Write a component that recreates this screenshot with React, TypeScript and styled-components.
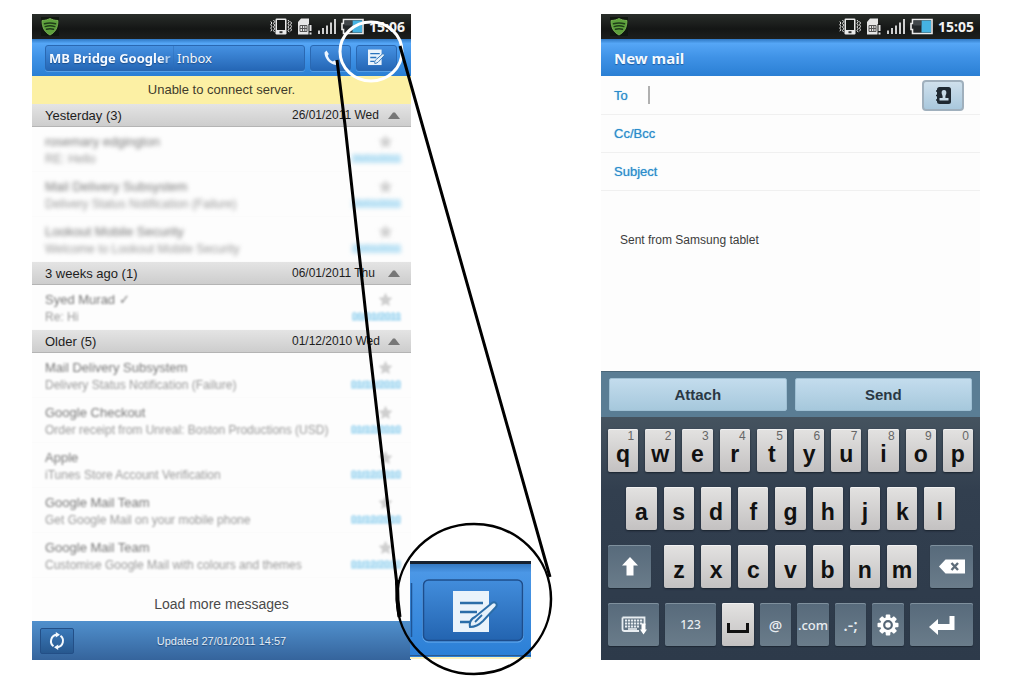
import React from 'react';
import styled, { createGlobalStyle, css } from 'styled-components';

const sans = `"Liberation Sans", Arial, sans-serif`;
const human = `"Noto Sans", "Open Sans", sans-serif`;

const GlobalStyle = createGlobalStyle`
  * { box-sizing: border-box; }
  body { margin: 0; background: #fff; font-family: ${sans}; color: #222; }
  button, input, textarea { font: inherit; color: inherit; margin: 0; }
  button { cursor: pointer; padding: 0; }
  svg { display: block; }
`;

const Page = styled.main`
  display: grid;
  grid-template-columns: minmax(0, 379fr) minmax(0, 190fr) minmax(0, 379fr);
  padding: 14px 44px 22px 32px;
`;

const Phone = styled.section<{ $column: number }>`
  grid-column: ${(p) => p.$column};
  grid-row: 1;
  position: relative;
  display: flex;
  flex-direction: column;
  background: #fdfdfd;
`;

/* Status bar */

const StatusRow = styled.div`
  display: flex;
  align-items: center;
  height: 25px;
  padding: 0 6px 0 9px;
  background: linear-gradient(#292d2a, #141615 60%, #1d1f1e);
  color: #f2f2f2;
`;

const StatusIcons = styled.div`
  display: flex;
  align-items: center;
  gap: 5px;
  margin-left: auto;
`;

const Clock = styled.time`
  font: bold 14px/24px ${human};
  margin-left: 5px;
`;

const ShieldIcon = () => (
  <svg width="18" height="19" viewBox="0 0 18 19">
    <rect width="18" height="19" fill="#10170f" />
    <path d="M1 3.500C4 3.500 7 2.500 9 1.500C11 2.500 14 3.500 17 3.500C17 11 14 15.500 9 18C4 15.500 1 11 1 3.500Z" fill="#5da03c" stroke="#82bd5a" strokeWidth="0.800" />
    <path d="M3.500 6.800Q9 5 14.500 6.800M4.200 9.600Q9 8 13.800 9.600M5.500 12.300Q9 11 12.500 12.300" fill="none" stroke="#1f3d19" strokeWidth="1.500" strokeLinecap="round" />
  </svg>
);

const VibrateIcon = () => (
  <svg width="22" height="17" viewBox="0 0 22 17">
    <rect x="5.500" y="0.500" width="11" height="16" rx="1.200" fill="#e9e9e9" />
    <rect x="7" y="2" width="8" height="10" fill="#151716" />
    <rect x="9.500" y="13.200" width="3" height="2" fill="#333" />
    <path d="M3.500 2l1.200 1.600-1.200 1.800 1.200 1.800-1.200 1.800 1.200 1.800-1.200 1.800 1.200 1.600M.8 3.500l1 1.500-1 1.700 1 1.700-1 1.700 1 1.700-1 1.500M18 2l1.200 1.600L18 5.400l1.200 1.800L18 9l1.200 1.800-1.200 1.800 1.200 1.600M20.500 3.500l1 1.500-1 1.700 1 1.700-1 1.700 1 1.700-1 1.500" fill="none" stroke="#e9e9e9" strokeWidth="1" />
  </svg>
);

const SimIcon = () => (
  <svg width="16" height="17" viewBox="0 0 16 17">
    <path d="M4 0.500H12V7H13V16.500H1V4Z" fill="#e6e6e6" />
    <path d="M3 7.500H10V13.500H3ZM5.500 7.500V13.500M7.800 7.500V13.500M3 10.500H10" fill="none" stroke="#555" strokeWidth="1" />
    <rect x="11.500" y="6" width="4" height="11" fill="#151716" />
    <path d="M13.500 7V13M13.500 14.500V16.500" stroke="#e6e6e6" strokeWidth="2" />
  </svg>
);

const SignalIcon = () => (
  <svg width="18" height="17" viewBox="0 0 18 17">
    <path d="M1 16V12.500M5 16V10M9 16V7.500M13 16V4.500M17 16V1" stroke="#cfcfcf" strokeWidth="2" />
  </svg>
);

const BatteryIcon = () => (
  <svg width="23" height="17" viewBox="0 0 23 17">
    <path d="M2.500 1.500H22V15.500H2.500V11.500H1V5.500H2.500Z" fill="#23272a" stroke="#ececec" strokeWidth="1.600" />
    <rect x="11.500" y="2.500" width="9.500" height="12" fill="#45b3e2" />
    <rect x="3.500" y="2.500" width="8" height="5" fill="#555b60" opacity=".6" />
  </svg>
);

const StatusBar = ({ time }: { time: string }) => (
  <StatusRow>
    <ShieldIcon />
    <StatusIcons>
      <VibrateIcon />
      <SimIcon />
      <SignalIcon />
      <BatteryIcon />
    </StatusIcons>
    <Clock>{time}</Clock>
  </StatusRow>
);

/* Title bars */

const TitleBar = styled.header`
  display: flex;
  align-items: center;
  gap: 5px;
  height: 37px;
  padding: 0 14px 0 13px;
  background: linear-gradient(#2f78c4, #55a6f6 12%, #3f92e6 50%, #2a7fd4);
  color: #f4f9ff;
`;

const Title = styled.h1`
  margin: 0;
  font: bold 15px/20px ${human};
  text-shadow: 0 1px 1px #1c5a9e;
`;

const blueButton = css`
  display: flex;
  align-items: center;
  height: 26px;
  border: 1px solid #2a68b2;
  border-radius: 3px;
  background: linear-gradient(#4591e2, #2567b6);
  box-shadow: 0 1px 0 #559fe6;
  color: #f4f9ff;
`;

const FolderButton = styled.button`
  ${blueButton}
  flex: 1;
  min-width: 0;
  font: 13px/24px ${human};
  text-shadow: 0 1px 1px #1c4f8c;
`;

const Account = styled.strong`
  width: 128px;
  padding-left: 3px;
  border-right: 1px solid #2d6db8;
  overflow: hidden;
  white-space: nowrap;
  text-align: left;
  mask-image: linear-gradient(to right, #000 115px, rgba(0, 0, 0, 0.5) 123px);
`;

const Folder = styled.span`
  padding-left: 3px;
`;

const BarButton = styled.button`
  ${blueButton}
  justify-content: center;
  width: 41px;
`;

const PhoneIcon = () => (
  <svg width="16" height="18" viewBox="0 0 16 18">
    <path d="M3.500 1.500L1.500 3.500C1.500 9.500 6.500 15 13 16L15 13.500L11.500 11.500L9.800 12.600C7.300 11.300 5.700 9.300 4.800 6.700L5.800 5Z" fill="#eef6ff" />
  </svg>
);

const ComposeIcon = ({ size }: { size: number }) => (
  <svg width={size} height={size} viewBox="0 0 45 42">
    <path d="M0 0H36V41H0Z" fill="#eaf3fb" />
    <path d="M6 11H31M6 21H22M6 31H17" stroke="#2b74bd" strokeWidth="3.400" />
    <path d="M18 37C17 32 18 29 22 26L38 12C41 10 45 13 43 16L29 31C26 35 22 36 18 37Z" fill="#e6f1fb" stroke="#286fb6" strokeWidth="2.400" />
  </svg>
);

/* Inbox */

const Banner = styled.p`
  margin: 0;
  font-size: 13px;
  line-height: 28px;
  text-align: center;
  background: #fcf0a4;
  color: #3f3c2c;
`;

const GroupHeader = styled.button`
  display: flex;
  align-items: center;
  width: 100%;
  height: 23px;
  padding: 0 11px 0 13px;
  border: 0;
  border-bottom: 1px solid #b4b4b4;
  background: linear-gradient(#e4e4e4, #cdcdcd);
  color: #1d1d1d;
  font-size: 13px;
  text-align: left;
`;

const GroupDate = styled.span`
  width: 92px;
  margin-left: auto;
  margin-right: 4px;
  font-size: 12px;
  white-space: nowrap;
`;

const Messages = styled.ul`
  margin: 0;
  padding: 0;
  list-style: none;
`;

const Message = styled.li<{ $blur: number }>`
  display: grid;
  grid-template-columns: minmax(0, 1fr) 52px;
  grid-template-rows: 17px 17px;
  align-items: center;
  height: 45px;
  padding: 6px 10px 0 13px;
  border-bottom: 1px solid #fbfbfb;
  white-space: nowrap;

  & > * {
    filter: blur(${(p) => p.$blur}px);
  }
`;

const Sender = styled.span`
  font-size: 13px;
  color: #777;
`;

const Preview = styled.span`
  font-size: 12px;
  color: #999;
`;

const Star = styled.span`
  justify-self: end;
  padding-right: 8px;
`;

const Sent = styled.time`
  justify-self: end;
  font-size: 10px;
  line-height: 8px;
  color: #9fd4ef;
  background: #c8e8f7;
`;

const LoadMore = styled.button`
  height: 43px;
  padding-top: 8px;
  border: 0;
  background: none;
  font-size: 14px;
  color: #4a4a4a;
`;

const Footer = styled.footer`
  display: grid;
  grid-template-columns: 34px 1fr 34px;
  align-items: center;
  height: 39px;
  padding: 0 8px;
  background: linear-gradient(#5090cd, #35649c);
  color: #e3edf7;
  font-size: 11px;
  text-align: center;
  text-shadow: 0 1px 1px #234b7a;
`;

const RefreshButton = styled.button`
  display: grid;
  place-items: center;
  height: 26px;
  border: 1px solid #234f87;
  border-radius: 2px;
  background: linear-gradient(#3a78b8, #27588f);
`;

const RefreshIcon = () => (
  <svg width="18" height="18" viewBox="0 0 18 18">
    <path d="M5.500 14.200A6.400 6.400 0 0 1 8.500 2.800M12.500 3.800A6.400 6.400 0 0 1 9.500 15.200" fill="none" stroke="#f3f8fd" strokeWidth="2" />
    <path d="M7.800 0L12 2.800L7.800 5.600ZM10.200 12.400L6 15.200L10.200 18Z" fill="#f3f8fd" />
  </svg>
);

type Mail = [sender: string, preview: string];
type Group = { title: string; date: string; blur: number; sent: string; mails: Mail[] };

const groups: Group[] = [
  {
    title: 'Yesterday (3)',
    date: '26/01/2011 Wed',
    sent: '26/01/2011',
    blur: 2,
    mails: [
      ['rosemary edgington', 'RE: Hello'],
      ['Mail Delivery Subsystem', 'Delivery Status Notification (Failure)'],
      ['Lookout Mobile Security', 'Welcome to Lookout Mobile Security'],
    ],
  },
  {
    title: '3 weeks ago (1)',
    date: '06/01/2011 Thu',
    sent: '06/01/2011',
    blur: 1,
    mails: [['Syed Murad ✓', 'Re: Hi']],
  },
  {
    title: 'Older (5)',
    date: '01/12/2010 Wed',
    sent: '01/12/2010',
    blur: 1,
    mails: [
      ['Mail Delivery Subsystem', 'Delivery Status Notification (Failure)'],
      ['Google Checkout', 'Order receipt from Unreal: Boston Productions (USD)'],
      ['Apple', 'iTunes Store Account Verification'],
      ['Google Mail Team', 'Get Google Mail on your mobile phone'],
      ['Google Mail Team', 'Customise Google Mail with colours and themes'],
    ],
  },
];

const Inbox = () => (
  <Phone $column={1}>
    <StatusBar time="15:06" />
    <TitleBar>
      <FolderButton>
        <Account>MB Bridge Googler</Account>
        <Folder>Inbox</Folder>
      </FolderButton>
      <BarButton aria-label="Call">
        <PhoneIcon />
      </BarButton>
      <BarButton aria-label="Compose">
        <ComposeIcon size={17} />
      </BarButton>
    </TitleBar>
    <Banner role="status">Unable to connect server.</Banner>
    {groups.map((g) => (
      <div key={g.title}>
        <GroupHeader>
          {g.title}
          <GroupDate>{g.date}</GroupDate>
          <svg width="12" height="7" viewBox="0 0 12 7">
            <path d="M0 7L5 0.500H7L12 7Z" fill="#777" />
          </svg>
        </GroupHeader>
        <Messages>
          {g.mails.map(([sender, preview], i) => (
            <Message key={i} $blur={g.blur}>
              <Sender>{sender}</Sender>
              <Star>
                <svg width="15" height="15" viewBox="0 0 24 24">
                  <path d="M12 1L15.400 8.300L23 9.200L17.400 14.600L18.900 22.500L12 18.600L5.100 22.500L6.600 14.600L1 9.200L8.600 8.300Z" fill="#cfcfcf" />
                </svg>
              </Star>
              <Preview>{preview}</Preview>
              <Sent>{g.sent}</Sent>
            </Message>
          ))}
        </Messages>
      </div>
    ))}
    <LoadMore>Load more messages</LoadMore>
    <Footer>
      <RefreshButton aria-label="Refresh">
        <RefreshIcon />
      </RefreshButton>
      <span>Updated 27/01/2011 14:57</span>
    </Footer>
    <Callout />
  </Phone>
);

/* Magnified compose button, anchored to the right edge of the inbox */

const CalloutLayer = styled.svg`
  position: absolute;
  top: 0;
  left: calc(100% - 81px);
  pointer-events: none;
`;

const Callout = () => (
  <CalloutLayer width="230" height="668" viewBox="330 14 230 668">
    <defs>
      <linearGradient id="lensBar" x1="0" y1="0" x2="0" y2="1">
        <stop offset="0" stopColor="#2c6db4" />
        <stop offset=".12" stopColor="#4b97e6" />
        <stop offset="1" stopColor="#2b7fd6" />
      </linearGradient>
      <linearGradient id="lensButton" x1="0" y1="0" x2="0" y2="1">
        <stop offset="0" stopColor="#428ddc" />
        <stop offset="1" stopColor="#2364b0" />
      </linearGradient>
    </defs>
    <rect x="410" y="656" width="121" height="3" fill="#fbf2bd" />
    <rect x="410" y="561" width="121" height="96" fill="url(#lensBar)" />
    <rect x="410" y="561" width="121" height="3" fill="#172130" />
    <rect x="410" y="655" width="121" height="1" fill="#2b5a8e" />
    <path d="M411.500 583V637" stroke="#1f5596" strokeWidth="1.500" />
    <rect x="423" y="580" width="100" height="62" rx="5" fill="none" stroke="#6aaef0" strokeWidth="1" />
    <rect x="423.500" y="580" width="99" height="60.500" rx="5" fill="url(#lensButton)" stroke="#1d4d8c" strokeWidth="1.500" />
    <svg x="453" y="591" width="45" height="42" viewBox="0 0 45 42">
      <path d="M0 0H36V41H0Z" fill="#eaf3fb" />
      <path d="M7 12H30M7 21H24M7 31H17" stroke="#2b6da8" strokeWidth="2.400" />
      <path d="M17 36C16 31 18 28 22 26L39 12C42 10 45 13 43 16L30 30C26 34 22 36 17 36Z" fill="#e6f1fb" stroke="#2b6da8" strokeWidth="2" />
      <path d="M22 31L29 24" stroke="#2b6da8" strokeWidth="1.800" />
    </svg>
    <ellipse cx="371" cy="51.500" rx="31" ry="29.500" fill="none" stroke="#fff" strokeWidth="3" />
    <ellipse cx="474" cy="599" rx="77" ry="75" fill="none" stroke="#000" strokeWidth="2.500" />
    <path d="M337 60L345 125L370 352L397 585M400 46L550 577" fill="none" stroke="#000" strokeWidth="3" />
    <path d="M397 580L397.500 600L399.500 617" fill="none" stroke="#000" strokeWidth="4" />
  </CalloutLayer>
);

/* Compose screen */

const Field = styled.div`
  display: flex;
  align-items: center;
  height: 38px;
  padding: 0 16px 0 13px;
  border-bottom: 1px solid #f0f0f0;
  font-size: 13px;

  &:first-of-type {
    height: 39px;
  }
`;

const Label = styled.label`
  min-width: 34px;
  color: #2b8ccb;
  text-shadow: 0 0 1px #6bb2de;
`;

const Caret = styled.span`
  width: 2px;
  height: 18px;
  background: #b0b0b0;
`;

const TextInput = styled.input`
  flex: 1;
  min-width: 0;
  border: 0;
  outline: 0;
  background: none;
`;

const ContactsButton = styled.button`
  display: grid;
  place-items: center;
  width: 42px;
  height: 31px;
  border: 2px solid #a0b0bd;
  border-radius: 4px;
  background: linear-gradient(#cfe0ec, #a9c8dd);
`;

const Form = styled.form`
  flex: 1;
  display: flex;
  flex-direction: column;
`;

const Body = styled.textarea`
  flex: 1;
  min-height: 180px;
  padding: 41px 19px 0;
  border: 0;
  outline: 0;
  resize: none;
  background: none;
  font-size: 12px;
  line-height: 16px;
  color: #3c3c3c;
`;

const Actions = styled.div`
  display: grid;
  grid-template-columns: 1fr 1fr;
  gap: 8px;
  height: 46px;
  padding: 6px 8px;
  border-top: 1px solid #4a6678;
  background: #5a7d94;
`;

const ActionButton = styled.button`
  border: 1px solid #9fc0d4;
  border-radius: 2px;
  background: linear-gradient(#c3dced, #a6c8dc);
  font-size: 15px;
  font-weight: bold;
  color: #2a3844;
`;

/* Keyboard */

const Keyboard = styled.div`
  display: flex;
  flex-direction: column;
  gap: 15px;
  padding: 12px 7px 14px;
  background: linear-gradient(#45535f, #323f4f 30%, #2d3a4a);
`;

const KeyRow = styled.div<{ $inset?: string }>`
  display: grid;
  grid-auto-flow: column;
  grid-auto-columns: minmax(0, 1fr);
  gap: 7px;
  padding: 0 ${(p) => p.$inset ?? '0'};
`;

const ShiftRow = styled.div`
  display: grid;
  grid-template-columns: 43fr 253fr 43fr;
  gap: 13px;
`;

const BottomRow = styled.div`
  display: grid;
  grid-template-columns: 51fr 51fr 32fr 31fr 32fr 31fr 32fr 63fr;
  gap: 6px;
`;

const Key = styled.button<{ $dark?: boolean; $size?: number }>`
  position: relative;
  display: grid;
  place-items: center;
  min-width: 0;
  height: 43px;
  border: 0;
  border-radius: 2px;
  ${(p) =>
    p.$dark
      ? css`
          background: linear-gradient(#576a7b, #6a7c8a);
          box-shadow: inset 0 1px 0 #7f909d, 0 1px 1px #1e2935;
          color: #e8edf1;
          font: 500 ${p.$size ?? 13}px/20px ${human};
        `
      : css`
          padding-top: 6px;
          background: linear-gradient(#e3e2e1, #c3c1c1);
          box-shadow: inset 0 1px 0 #f2f2f2, 0 1px 2px #18212c;
          color: #111;
          font: bold 23px/20px ${sans};
        `}
`;

const Hint = styled.span`
  position: absolute;
  top: 2px;
  right: 4px;
  font: 12px/10px ${sans};
  color: #666;
`;

const letters = (row: string) =>
  row.split('').map((c) => <Key key={c} type="button">{c}</Key>);

const NewMail = () => (
  <Phone $column={3}>
    <StatusBar time="15:05" />
    <TitleBar>
      <Title>New mail</Title>
    </TitleBar>
    <Form onSubmit={(e) => e.preventDefault()}>
      <Field>
        <Label htmlFor="to">To</Label>
        <Caret />
        <TextInput id="to" />
        <ContactsButton type="button" aria-label="Contacts">
          <svg width="15" height="17" viewBox="0 0 15 17">
            <rect x="1" width="14" height="17" rx="2.500" fill="#1f2932" />
            <path d="M0 4H2M0 8.500H2M0 13H2" stroke="#1f2932" strokeWidth="1.500" />
            <path d="M8 3C10 3 10.600 4.500 10.300 6.500C10.100 7.800 9.400 8.300 9.400 9.500V11H12.500V13.500H3.500V11H6.600V9.500C6.600 8.300 5.900 7.800 5.700 6.500C5.400 4.500 6 3 8 3Z" fill="#c5d9e6" />
          </svg>
        </ContactsButton>
      </Field>
      <Field>
        <Label htmlFor="cc">Cc/Bcc</Label>
        <TextInput id="cc" />
      </Field>
      <Field>
        <Label htmlFor="subject">Subject</Label>
        <TextInput id="subject" />
      </Field>
      <Body aria-label="Message" defaultValue="Sent from Samsung tablet" />
      <Actions>
        <ActionButton type="button">Attach</ActionButton>
        <ActionButton type="submit">Send</ActionButton>
      </Actions>
    </Form>
    <Keyboard>
      <KeyRow>
        {'qwertyuiop'.split('').map((c, i) => (
          <Key key={c} type="button">
            {c}
            <Hint>{(i + 1) % 10}</Hint>
          </Key>
        ))}
      </KeyRow>
      <KeyRow $inset="5%">{letters('asdfghjkl')}</KeyRow>
      <ShiftRow>
        <Key $dark aria-label="Shift">
          <svg width="16" height="19" viewBox="0 0 16 19">
            <path d="M8 0L16 8.500H11.500V18.500H4.500V8.500H0Z" fill="#fff" />
          </svg>
        </Key>
        <KeyRow>{letters('zxcvbnm')}</KeyRow>
        <Key $dark aria-label="Backspace">
          <svg width="26" height="15" viewBox="0 0 26 15">
            <path d="M0 7.500L6.500 0.500H26V14.500H6.500Z" fill="#fff" />
            <path d="M12.500 4L19 11M19 4L12.500 11" stroke="#5d6c79" strokeWidth="2.400" />
          </svg>
        </Key>
      </ShiftRow>
      <BottomRow>
        <Key $dark aria-label="Hide keyboard">
          <svg width="26" height="20" viewBox="0 0 26 20">
            <path d="M1.500 2.500H23.500V10M18 16H3.500Q1.500 16 1.500 14V2.500" fill="none" stroke="#e8edf1" strokeWidth="1.800" />
            <path d="M4 5.500H21.500M4 8.500H21.500M4 11.500H18" stroke="#e8edf1" strokeWidth="2" strokeDasharray="2.200 .8" />
            <path d="M7 14H16" stroke="#e8edf1" strokeWidth="1.600" />
            <path d="M20.500 8.500H24.500V14.500H26L22.500 19.500L19 14.500H20.500Z" fill="#fff" />
          </svg>
        </Key>
        <Key $dark $size={12}>123</Key>
        <Key aria-label="Space">
          <svg width="22" height="10" viewBox="0 0 22 10">
            <path d="M1.500 0V8.500H20.500V0" fill="none" stroke="#111" strokeWidth="3" />
          </svg>
        </Key>
        <Key $dark $size={15}>@</Key>
        <Key $dark>.com</Key>
        <Key $dark $size={17}>.-;</Key>
        <Key $dark aria-label="Settings">
          <svg width="22" height="22" viewBox="-11 -11 22 22">
            {[0, 45, 90, 135].map((a) => (
              <rect key={a} x="-2.300" y="-10.500" width="4.600" height="21" rx="1" fill="#fff" transform={`rotate(${a})`} />
            ))}
            <circle r="7.800" fill="#fff" />
            <circle r="3.800" fill="#fff" stroke="#566676" strokeWidth="2.200" />
          </svg>
        </Key>
        <Key $dark aria-label="Enter">
          <svg width="26" height="20" viewBox="0 0 26 20">
            <path d="M0 12L9 4V9H20.500V1H25.500V15H9V20Z" fill="#fff" />
          </svg>
        </Key>
      </BottomRow>
    </Keyboard>
  </Phone>
);

export default function App() {
  return (
    <>
      <GlobalStyle />
      <Page>
        <Inbox />
        <NewMail />
      </Page>
    </>
  );
}
